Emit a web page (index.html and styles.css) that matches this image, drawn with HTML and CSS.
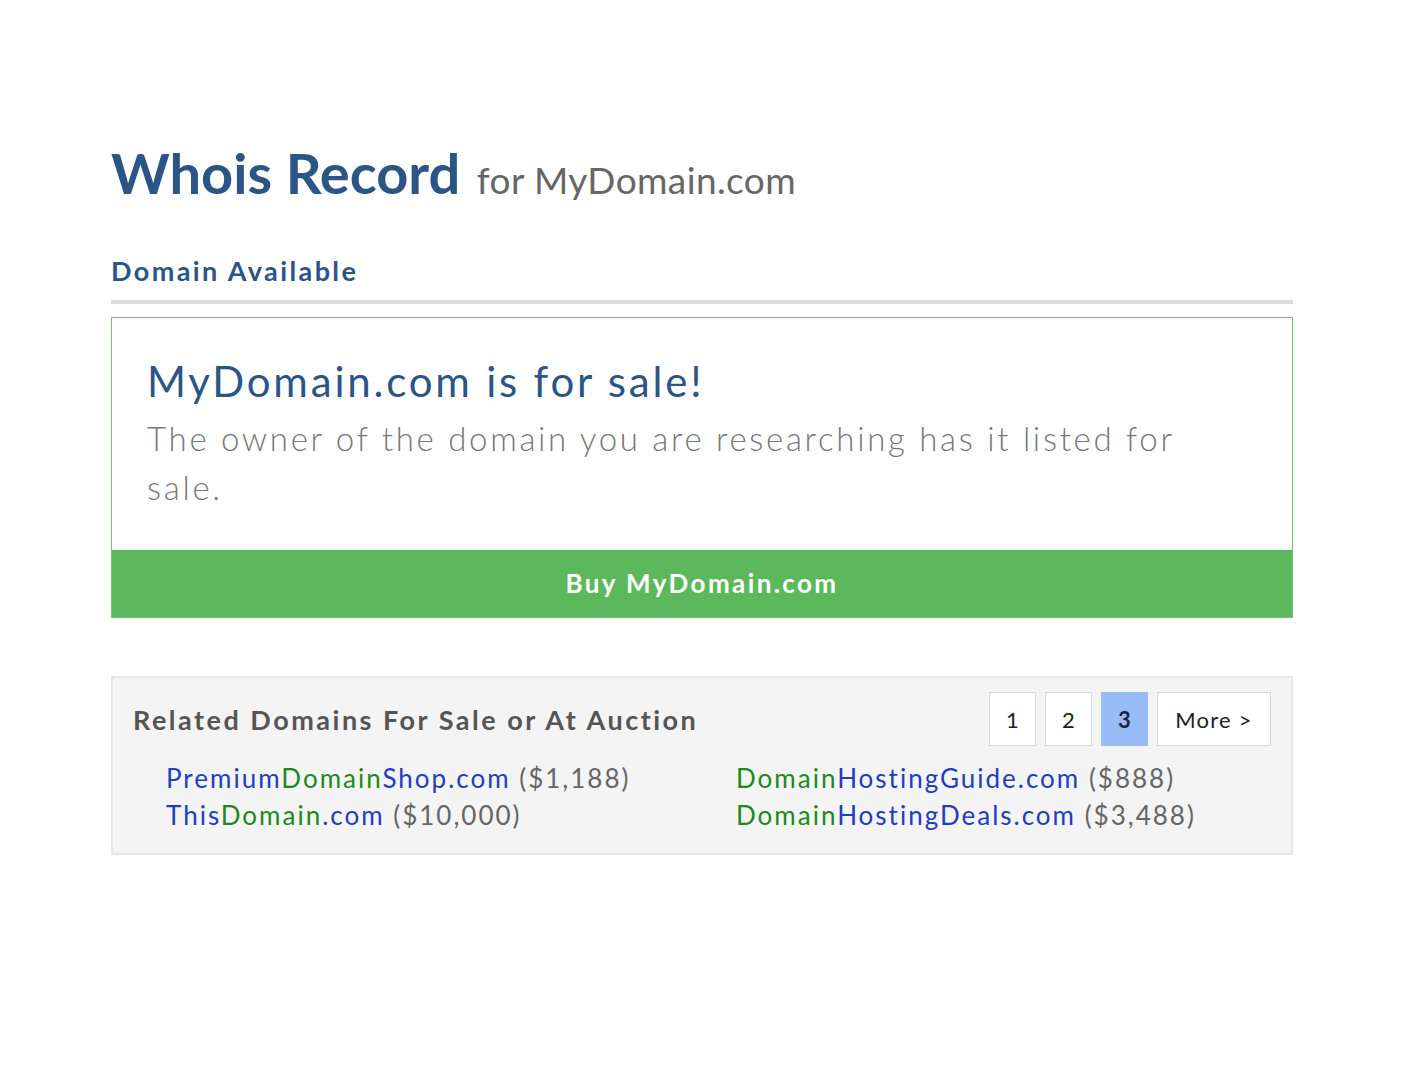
FILE: index.html
```html
<!DOCTYPE html>
<html>
<head>
<meta charset="utf-8">
<link rel="stylesheet" href="styles.css">
</head>
<body>
<main class="page">
  <h1 class="title">Whois Record <span class="title-sub">for MyDomain.com</span></h1>
  <h2 class="section">Domain Available</h2>
  <div class="rule"></div>
  <section class="sale">
    <div class="sale-body">
      <h3 class="sale-head">MyDomain.com is for sale!</h3>
      <p class="sale-text">The owner of the domain you are researching has it listed for sale.</p>
    </div>
    <a class="buy" href="#">Buy MyDomain.com</a>
  </section>
  <section class="related">
    <div class="related-top">
      <h4 class="related-head">Related Domains For Sale or At Auction</h4>
      <nav class="pager">
        <span class="pg">1</span>
        <span class="pg">2</span>
        <span class="pg active">3</span>
        <span class="pg more">More &gt;</span>
      </nav>
    </div>
    <div class="links">
      <div class="col">
        <div class="item"><span class="b">Premium</span><span class="g">Domain</span><span class="b">Shop.com</span> <span class="price">($1,188)</span></div>
        <div class="item"><span class="b">This</span><span class="g">Domain</span><span class="b">.com</span> <span class="price">($10,000)</span></div>
      </div>
      <div class="col">
        <div class="item"><span class="g">Domain</span><span class="b">HostingGuide.com</span> <span class="price">($888)</span></div>
        <div class="item"><span class="g">Domain</span><span class="b">HostingDeals.com</span> <span class="price">($3,488)</span></div>
      </div>
    </div>
  </section>
</main>
</body>
</html>
```

FILE: styles.css
```css
* { box-sizing: border-box; }
body {
  margin: 0;
  background: #fff;
  font-family: Lato, "Open Sans", sans-serif;
}
.page {
  width: 1182px;
  margin-left: 111px;
  padding-top: 138px;
}
.title {
  margin: 0;
  font-size: 56px;
  font-weight: 700;
  color: #2b5587;
  line-height: 70px;
}
.title-sub {
  font-size: 37px;
  font-weight: 400;
  color: #666;
  letter-spacing: 0.4px;
  margin-left: 3px;
}
.section {
  margin: 38px 0 0;
  font-size: 27px;
  font-weight: 700;
  color: #2b5587;
  line-height: 36px;
  letter-spacing: 2.4px;
}
.rule {
  height: 4px;
  background: #dcdcdc;
  margin-top: 11px;
}
.sale {
  margin-top: 13px;
  border: 1px solid #6cc46c;
}
.sale-body {
  padding: 31px 35px 38px;
}
.sale-head {
  margin: 0;
  font-size: 42px;
  font-weight: 400;
  color: #2b5587;
  line-height: 65px;
  letter-spacing: 2.8px;
}
.sale-text {
  margin: 0;
  font-size: 33px;
  font-weight: 300;
  color: #777;
  line-height: 49px;
  letter-spacing: 2.7px;
  padding-right: 60px;
}
.buy {
  display: block;
  height: 67px;
  line-height: 66px;
  background: #5cb85c;
  text-align: center;
  color: #fff;
  font-size: 26px;
  font-weight: 700;
  text-decoration: none;
  letter-spacing: 2.4px;
}
.related {
  margin-top: 58px;
  background: #f4f4f4;
  border: 2px solid #e6e6e6;
  padding: 14px 20px 19px 20px;
}
.related-top {
  display: flex;
  justify-content: space-between;
  align-items: center;
}
.related-head {
  margin: 0;
  font-size: 27px;
  font-weight: 700;
  color: #555;
  letter-spacing: 2.5px;
}
.pager {
  display: flex;
  gap: 9px;
}
.pg {
  display: flex;
  align-items: center;
  justify-content: center;
  width: 47px;
  height: 54px;
  background: #fff;
  border: 1px solid #d8d8d8;
  font-size: 22px;
  color: #222;
}
.pg.active {
  background: #98bcf6;
  border-color: #98bcf6;
  font-weight: 700;
  color: #1a2540;
}
.pg.more {
  width: 114px;
  letter-spacing: 1.2px;
}
.links {
  display: flex;
  padding-left: 33px;
  margin-top: 14px;
}
.col {
  flex: 0 0 570px;
}
.item {
  font-size: 26px;
  line-height: 37px;
  letter-spacing: 2px;
  white-space: nowrap;
}
.b { color: #1f3cc4; }
.g { color: #1b8a1b; }
.price { color: #666; }
```
